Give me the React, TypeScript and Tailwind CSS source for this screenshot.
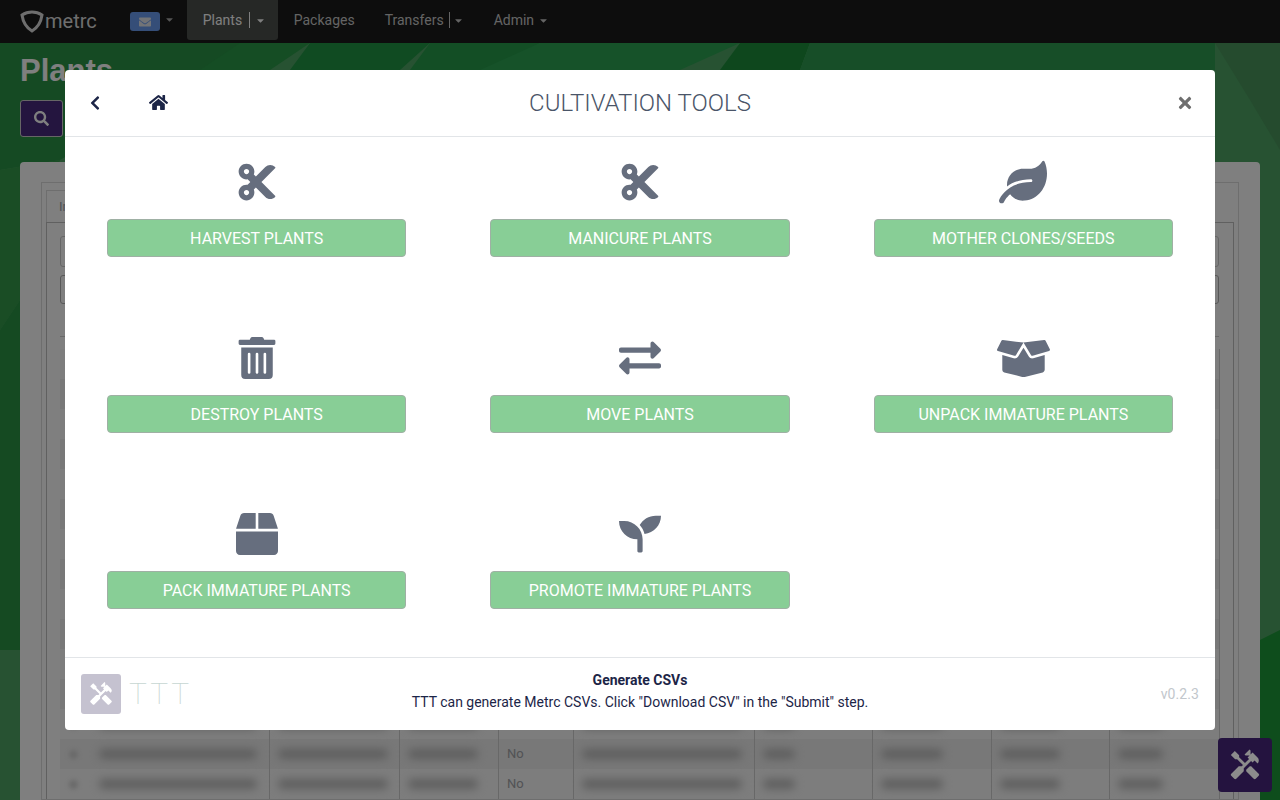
import React from "react";
import { FaCut, FaLeaf, FaTrashAlt, FaExchangeAlt, FaBoxOpen, FaBox, FaSeedling, FaHome, FaChevronLeft, FaTimes, FaSearch, FaEnvelope, FaCaretDown } from "react-icons/fa";
import { MdHandyman } from "react-icons/md";

const tools = [
  { label: "HARVEST PLANTS", Icon: FaCut, size: "text-[42px]" },
  { label: "MANICURE PLANTS", Icon: FaCut, size: "text-[42px]" },
  { label: "MOTHER CLONES/SEEDS", Icon: FaLeaf, size: "text-[48px]" },
  { label: "DESTROY PLANTS", Icon: FaTrashAlt, size: "text-[42px]" },
  { label: "MOVE PLANTS", Icon: FaExchangeAlt, size: "text-[42px]" },
  { label: "UNPACK IMMATURE PLANTS", Icon: FaBoxOpen, size: "text-[53px]" },
  { label: "PACK IMMATURE PLANTS", Icon: FaBox, size: "text-[42px]" },
  { label: "PROMOTE IMMATURE PLANTS", Icon: FaSeedling, size: "text-[42px]" },
];

const colWidths = ["w-[210px]", "w-[130px]", "w-[99px]", "w-[75px]", "w-[181px]", "w-[118px]", "w-[119px]", "w-[118px]", "w-[110px]"];
const blurWidths = ["w-[158px]", "w-[110px]", "w-[70px]", "", "w-[160px]", "w-[32px]", "w-[62px]", "w-[60px]", "w-[45px]"];

function Row({ odd, no }: { odd: boolean; no?: boolean }) {
  return (
    <div className={`flex h-[30px] shrink-0 ${odd ? "bg-[#fafafa]" : "bg-[#f0f0f0]"}`}>
      {colWidths.map((w, i) => (
        <div key={i} className={`${w} shrink-0 flex items-center border-r border-[#d0d0d0] ${i === 0 ? "pl-[9px]" : "pl-[8px]"}`}>
          {i === 0 && <div className="mr-[21px] h-[9px] w-[9px] rounded-full bg-[#d4d4d4] blur-[2px]" />}
          {i === 3 ? (
            <span className="text-[13px] text-[#a4a6aa]">{no ? "No" : ""}</span>
          ) : (
            <div className={`${blurWidths[i]} h-[10px] rounded-full bg-[#bdbdbd] blur-[4px]`} />
          )}
        </div>
      ))}
    </div>
  );
}

export default function App() {
  const rows = Array.from({ length: 15 }, (_, i) => i);
  return (
    <div className="relative h-[800px] w-[1280px] overflow-hidden font-['Roboto',sans-serif]">
      {/* underlying page */}
      <div className="absolute inset-0 isolate bg-[#4ea464] flex flex-col">
        <svg className="absolute inset-0 h-full w-full" viewBox="0 0 1280 800" preserveAspectRatio="none">
          <polygon points="0,43 250,43 180,90 60,160 0,170" fill="#2a9446" />
          <polygon points="240,43 310,43 270,70 200,70" fill="#2a9a48" />
          <polygon points="310,43 430,43 400,70 290,70" fill="#209644" />
          <polygon points="430,43 540,43 500,70 410,70" fill="#269c4a" />
          <polygon points="540,43 740,43 680,70 480,70" fill="#2ca453" />
          <polygon points="740,43 810,43 800,70 720,70" fill="#1c8f3a" />
          <polygon points="810,43 1215,43 1215,70 800,70" fill="#2f9c50" />
          <polygon points="0,170 60,160 20,300 0,330" fill="#349a4a" />
          <polygon points="1215,43 1280,43 1280,150 1250,100" fill="#4a965c" />
          <polygon points="1260,640 1280,630 1280,800 1260,800" fill="#1c9a38" />
          <polygon points="0,330 20,300 20,650 0,650" fill="#2a9444" />
        </svg>
        <nav className="relative z-10 h-[43px] shrink-0 bg-[#1a1a1a] flex items-start">
          <div className="flex items-center ml-[20px] mt-[9px] text-[#dddddd]">
            <svg viewBox="0 0 24 24" className="h-[24px] w-[24px]" fill="none" stroke="currentColor" strokeWidth="3">
              <path d="M2 6 C8 2 16 2 22 6 C21 13 17 19 12 22 C7 19 3 13 2 6Z" />
            </svg>
            <span className="text-[20px] leading-none ml-px">metrc</span>
          </div>
          <div className="ml-[33px] mt-[12px] h-[19px] w-[30px] rounded-[3px] bg-[#6a9cf0] flex items-center justify-center text-[#e4e8ee] text-[12px]"><FaEnvelope /></div>
          <FaCaretDown className="ml-[4px] mt-[14px] text-[#aaaaaa] text-[11px]" />
          <div className="ml-[12px] h-[40px] w-[91px] rounded-b-[3px] bg-[#4c504c] flex items-center pl-[16px] text-[14px] text-[#ffffff]">
            Plants<span className="ml-[7px] h-[16px] w-px bg-[#ffffff]" /><FaCaretDown className="ml-[5px] text-[11px]" />
          </div>
          <div className="ml-[16px] h-[40px] flex items-center text-[14px] text-[#c8c8c8]">Packages</div>
          <div className="ml-[30px] h-[40px] flex items-center text-[14px] text-[#c8c8c8]">
            Transfers<span className="ml-[5px] h-[16px] w-px bg-[#c8c8c8]" /><FaCaretDown className="ml-[3px] text-[11px]" />
          </div>
          <div className="ml-[30px] h-[40px] flex items-center text-[14px] text-[#c8c8c8]">
            Admin<FaCaretDown className="ml-[4px] text-[11px]" />
          </div>
        </nav>
        <div className="relative z-10 px-[20px] flex flex-col flex-1 min-h-0">
          <h1 className="mt-[10px] h-[36px] text-[31px] leading-[36px] font-bold text-[#ffffff] font-['Liberation_Sans',sans-serif]">Plants</h1>
          <div className="mt-[11px] h-[37px] w-[43px] rounded-[3px] bg-[#482a7e] border border-[#cccccc] flex items-center justify-center text-[#ffffff] text-[15px]"><FaSearch /></div>
          <div className="mt-[25px] flex-1 min-h-0 rounded-t-[4px] bg-white px-[21px] pt-[20px] overflow-hidden">
            <div className="h-full border border-[#dddddd] px-[4px] pt-[7px] flex flex-col">
              <div className="h-[32px] w-[110px] shrink-0 border border-b-0 border-[#dddddd] pl-[12px] flex items-center text-[13px] text-[#a4a6aa]">Immature</div>
              <div className="flex-1 min-h-0 border border-[#c0c0c0] border-b-0 pl-[13px] pr-[14px] pt-[13px] flex flex-col overflow-hidden">
                <div className="h-[31px] shrink-0 border border-[#cccccc] rounded-[3px] mb-[8px]" />
                <div className="h-[29px] shrink-0 border border-[#b0b0b0] rounded-[3px]" />
                <div className="flex-1" />
                <div className="h-[13px] shrink-0 border-t border-[#d0d0d0]" />
                <div className="flex flex-col justify-end">
                  {rows.map((i) => (
                    <Row key={i} odd={i % 2 === 0} no={i >= 13} />
                  ))}
                </div>
              </div>
            </div>
          </div>
        </div>
      </div>

      {/* dim overlay */}
      <div className="absolute inset-0 bg-black/50" />

      {/* floating button */}
      <div className="absolute left-[1218px] top-[738px] h-[54px] w-[54px] rounded-[4px] bg-[#24133f] flex items-center justify-center text-[#8c8c8c] text-[34px]">
        <MdHandyman />
      </div>

      {/* modal */}
      <div className="absolute left-[65px] top-[70px] h-[660px] w-[1150px] rounded-[4px] bg-white flex flex-col">
        <header className="relative h-[67px] shrink-0 border-b border-[#e2e5e8] flex items-center justify-center">
          <FaChevronLeft className="absolute left-[22px] top-[25px] text-[#1c2547] text-[16px]" />
          <FaHome className="absolute left-[84px] top-[23px] text-[#1c2547] text-[19px]" />
          <h2 className="text-[24px] font-light text-[#4a5568]">CULTIVATION TOOLS</h2>
          <FaTimes className="absolute right-[21px] top-[24px] text-[#6e6e6e] text-[18px]" />
        </header>
        <main className="flex-1 grid grid-cols-3 auto-rows-[176px] min-h-0">
          {tools.map(({ label, Icon, size }, i) => (
            <div key={i} className="flex flex-col items-center px-[42px]">
              <div className={`mt-[24px] mb-[16px] h-[42px] flex items-center justify-center text-[#666e7e] ${size}`}>
                <Icon />
              </div>
              <button className="h-[38px] w-full rounded-[4px] border border-[#9fb0a4] bg-[#88ce96] pt-px text-[16px] text-white">
                {label}
              </button>
            </div>
          ))}
        </main>
        <footer className="h-[73px] shrink-0 border-t border-[#e2e5e8] flex items-center px-[16px] relative">
          <div className="h-[40px] w-[40px] rounded-[3px] bg-[#c5c2d0] flex items-center justify-center text-white text-[26px]">
            <MdHandyman />
          </div>
          <span className="ml-[8px] text-[30px] font-thin tracking-[3px] text-[#c7d6d2] leading-none">TTT</span>
          <div className="absolute inset-x-0 top-[11px] text-center text-[14px] leading-[22px] text-[#1c2547]">
            <div className="font-bold">Generate CSVs</div>
            <div>TTT can generate Metrc CSVs. Click "Download CSV" in the "Submit" step.</div>
          </div>
          <span className="ml-auto text-[14px] text-[#c2c7cc] tracking-[0.1px]">v0.2.3</span>
        </footer>
      </div>
    </div>
  );
}
